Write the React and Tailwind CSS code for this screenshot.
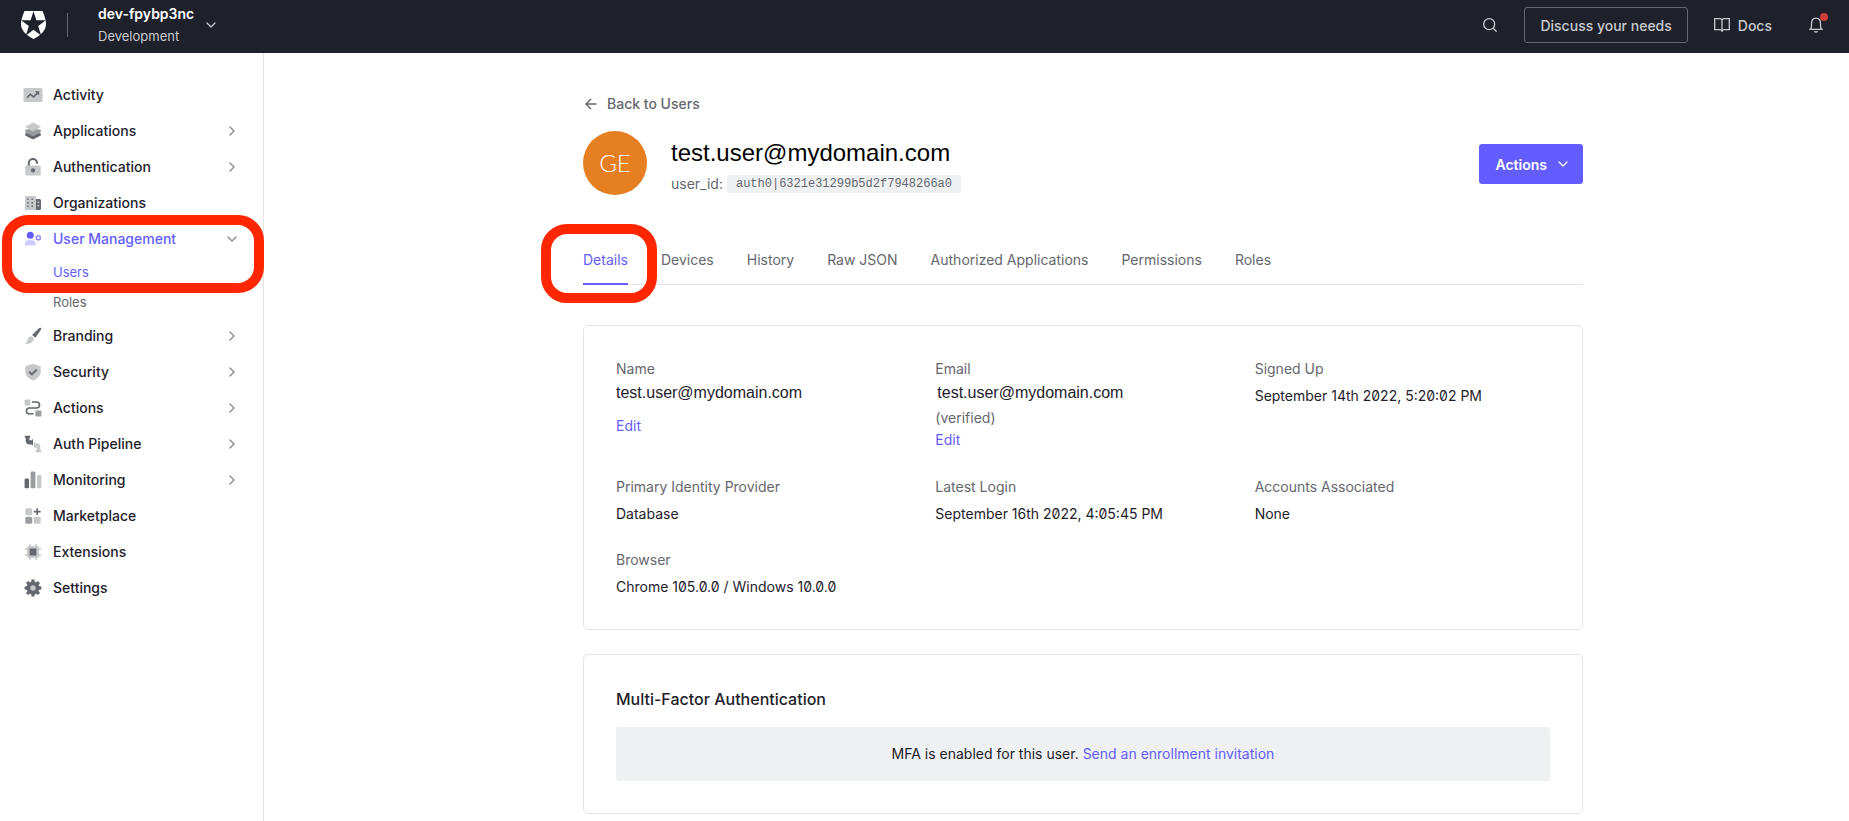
import React from "react";

const DARK = "#65676e";
const MID = "#9b9c9f";
const LIGHT = "#c7c8ca";

function ActivityIcon() {
  return (
    <svg width="20" height="18" viewBox="0 0 20 18" fill="none" className="shrink-0" aria-hidden="true">
      <rect x="0.5" y="2" width="19" height="14" rx="1.6" fill={LIGHT} />
      <path d="M4 11.8 7.3 8.3l3.2 2.6L15 6.6" stroke={DARK} strokeWidth="1.6" />
      <path d="M11.8 5.2h4.4v4.4z" fill={DARK} />
    </svg>
  );
}

function ApplicationsIcon() {
  return (
    <svg width="18" height="18" viewBox="0 0 18 18" aria-hidden="true">
      <path d="M1.2 11.6 9 10l7.8 1.6v2L9 17.6l-7.8-4z" fill={DARK} />
      <path d="M1.2 7.8 9 6.5l7.8 1.3v2.4L9 14.2l-7.8-4z" fill={MID} />
      <path d="M9 .5 17 4.8 9 9.4 1 4.8z" fill={LIGHT} />
    </svg>
  );
}

function AuthenticationIcon() {
  return (
    <svg width="18" height="18" viewBox="0 0 18 18" fill="none" aria-hidden="true">
      <path d="M4.8 8V5.4a4.1 4.1 0 0 1 8.2-.6v1" stroke={DARK} strokeWidth="2" />
      <rect x="1.3" y="7.4" width="15.4" height="10" rx="1.2" fill={LIGHT} />
      <circle cx="9" cy="12.4" r="2.1" fill={DARK} />
    </svg>
  );
}

function OrganizationsIcon() {
  return (
    <svg width="18" height="18" viewBox="0 0 18 18" aria-hidden="true">
      <path d="M1 3a1 1 0 0 1 1-1h9a1 1 0 0 1 1 1v13H1z" fill={LIGHT} />
      <path d="M12 5h3.5A1.5 1.5 0 0 1 17 6.500V14.500a1.500 1.500 0 0 1-1.500 1.500H12z" fill={DARK} />
      <path d="M3.200 4.500h1.500V6H3.200zM7.500 4.500H9V6H7.500zM3.200 8h1.500v1.500H3.200zM7.500 8H9v1.500H7.500zM3.200 11.500h1.500V13H3.200zM7.500 11.500H9V13H7.500z" fill={DARK} />
      <path d="M13.500 7.500h1.700v1.500h-1.700zM13.500 11h1.700v1.500h-1.700z" fill={LIGHT} />
    </svg>
  );
}

function UserManagementIcon() {
  return (
    <svg width="18" height="18" viewBox="0 0 18 18" fill="none" aria-hidden="true">
      <circle cx="6.3" cy="5.3" r="3.5" fill="#635dff" />
      <path d="M.8 14c0-2.700 2-4 5.500-4s5.500 1.300 5.500 4c0 .9-.5 1.500-1.300 1.500H2.100C1.300 15.500.8 14.900.8 14z" fill="#cfccff" />
      <circle cx="14.300" cy="7.800" r="1.900" stroke="#8b86ff" strokeWidth="1.200" />
      <path d="M14.300 4.700v1.200M14.300 9.700v1.200M11.600 6.300l1 .6M16 8.800l1 .6M11.600 9.400l1-.6M16 6.800l1-.6" stroke="#8b86ff" strokeWidth="1.200" />
    </svg>
  );
}

function BrandingIcon() {
  return (
    <svg width="18" height="18" viewBox="0 0 18 18" aria-hidden="true">
      <path d="M16.900.9c.6.500.4 1.300 0 1.900l-5.600 8-3.200-2.900L15 1.200c.5-.5 1.300-.8 1.900-.3z" fill={DARK} />
      <path d="M7 9.400c1.800.2 2.900 1.500 2.600 3.200-.5 3-3.900 4.800-8.800 4.300 1.700-.6 2.200-1.600 2.500-3.300C3.700 11 5 9.300 7 9.400z" fill={LIGHT} />
    </svg>
  );
}

function SecurityIcon() {
  return (
    <svg width="18" height="18" viewBox="0 0 18 18" fill="none" aria-hidden="true">
      <path d="M9 .7 16.700 3.300v5.200c0 4-3 7.200-7.700 8.900-4.700-1.700-7.700-4.900-7.700-8.900V3.300z" fill={LIGHT} />
      <path d="m5.200 8.700 2.700 2.700 4.900-4.800" stroke={DARK} strokeWidth="2" />
    </svg>
  );
}

function ActionsIcon() {
  return (
    <svg width="18" height="18" viewBox="0 0 18 18" fill="none" aria-hidden="true">
      <rect x=".6" y=".6" width="5.800" height="5.800" rx=".8" fill={LIGHT} />
      <path d="M8 3h4.500a3 3 0 0 1 0 6H5.300a2.900 2.900 0 0 0 0 5.800h4.200" stroke={DARK} strokeWidth="1.600" />
      <rect x="11.400" y="11.600" width="6" height="6" rx=".8" fill={MID} />
    </svg>
  );
}

function PipelineIcon() {
  return (
    <svg width="18" height="18" viewBox="0 0 18 18" aria-hidden="true">
      <path d="M.8.8h5.400v1.900h-.8v2.500h2.800v-.9H9v6.200h-.8v-.9H5.800a4.100 4.100 0 0 1-4.100-4.100V2.700H.8z" fill={DARK} />
      <path d="M10 7.300h.9v.9h1.400a4 4 0 0 1 4 4v3.100h1v1.900h-5.600v-1.900h.9v-2.900h-1.700v.9H10z" fill={LIGHT} />
    </svg>
  );
}

function MonitoringIcon() {
  return (
    <svg width="18" height="18" viewBox="0 0 18 18" aria-hidden="true">
      <rect x=".6" y="7.500" width="4.400" height="9.800" rx="1.200" fill={DARK} />
      <rect x="6.600" y=".6" width="4.800" height="16.700" rx="1.200" fill={MID} />
      <rect x="13" y="4" width="4.400" height="13.300" rx="1.200" fill={LIGHT} />
    </svg>
  );
}

function MarketplaceIcon() {
  return (
    <svg width="18" height="18" viewBox="0 0 18 18" aria-hidden="true">
      <rect x="1.300" y="1.300" width="6.900" height="6.900" rx="1.500" fill={LIGHT} />
      <rect x="1.300" y="9.800" width="6.900" height="6.900" rx="1.500" fill={MID} />
      <rect x="9.800" y="9.800" width="6.900" height="6.900" rx="1.500" fill={LIGHT} />
      <path d="M12.400 1.200H14v2.600h2.600v1.600H14V8h-1.600V5.400H9.800V3.800h2.600z" fill={DARK} />
    </svg>
  );
}

function ExtensionsIcon() {
  return (
    <svg width="18" height="18" viewBox="0 0 18 18" aria-hidden="true">
      <path d="M6 1v16M12 1v16M1 6h16M1 12h16" stroke={LIGHT} strokeWidth="1.400" />
      <rect x="3" y="3" width="12" height="12" rx="2" fill={LIGHT} />
      <rect x="5.600" y="5.600" width="6.800" height="6.800" rx=".5" fill={DARK} />
    </svg>
  );
}

function SettingsIcon() {
  const teeth = [0, 45, 90, 135, 180, 225, 270, 315];
  return (
    <svg width="18" height="18" viewBox="0 0 18 18" aria-hidden="true">
      {teeth.map((a) => (
        <path key={a} d="M7 4 7.500.6h3L11 4z" fill={DARK} transform={`rotate(${a} 9 9)`} />
      ))}
      <circle cx="9" cy="9" r="6.300" fill={DARK} />
      <circle cx="9" cy="9" r="2.700" fill={LIGHT} />
    </svg>
  );
}

function Chevron({ down = false, className = "" }) {
  return (
    <svg width="10" height="10" viewBox="0 0 10 10" fill="none" stroke="currentColor" strokeWidth="1.300" className={className} aria-hidden="true">
      <path d={down ? "M1 3l4 4 4-4" : "M3 1l4 4-4 4"} strokeLinecap="round" strokeLinejoin="round" />
    </svg>
  );
}

function NavItem({ icon: Icon, label, chevron, open, active }) {
  return (
    <a href="#" className={`flex h-9 items-center text-[14px] leading-5 font-medium ${active ? "text-[#635dff]" : "text-[#1e212a]"}`}>
      <span className="flex w-[18px] shrink-0 justify-center">
        <Icon />
      </span>
      <span className="ml-[11px] flex-1">{label}</span>
      {chevron && <Chevron down={open} className="text-[#84868c]" />}
    </a>
  );
}

function Header() {
  return (
    <header className="flex h-[53px] items-center bg-[#1e212a] pr-[25px] pb-[3px] pl-[21px] text-[#c9cace]">
      <a href="#" aria-label="Home">
        <svg width="25" height="28" viewBox="0 0 25 28" aria-hidden="true">
          <path d="M3.500 0h18c2 5 3.500 9 3.500 13 0 6.500-5 11-12.500 15C5 24 0 19.500 0 13 0 9 1.500 5 3.500 0z" fill="#fff" />
          <path d="m12.500.2 2.900 9.100h9.400l-7.600 5.700 2.900 9.400-7.600-5.700-7.600 5.700L7.800 15 .2 9.300h9.400z" fill="#1e212a" />
        </svg>
      </a>
      <span className="ml-[21px] h-6 w-px bg-[#65676e]" />
      <button type="button" className="ml-[30px] flex items-center text-left">
        <span className="flex flex-col">
          <span className="text-[14px] leading-[22px] font-semibold text-white">dev-fpybp3nc</span>
          <span className="text-[13px] leading-[22px]">Development</span>
        </span>
        <Chevron down className="ml-3" />
      </button>
      <div className="ml-auto flex items-center">
        <button type="button" aria-label="Search">
          <svg width="14" height="14" viewBox="0 0 14 14" fill="none" stroke="currentColor" strokeWidth="1.300" aria-hidden="true">
            <circle cx="6.200" cy="6.200" r="5.500" />
            <path d="m10.200 10.200 3.400 3.400" />
          </svg>
        </button>
        <button type="button" className="ml-[27px] h-9 rounded-[3px] border border-[#65676e] px-[15px] text-[14px] font-medium whitespace-nowrap">
          Discuss your needs
        </button>
        <a href="#" className="ml-[26px] flex items-center gap-2 text-[14px] font-medium">
          <svg width="16" height="14" viewBox="0 0 16 14" fill="none" stroke="currentColor" strokeWidth="1.300" aria-hidden="true">
            <path d="M8 2.200C7.700 1.200 7 .7 6 .7H.7v11H6c1 0 1.700.6 2 1.600.3-1 1-1.600 2-1.600h5.300V.7H10c-1 0-1.700.5-2 1.500zM8 2v11" />
          </svg>
          Docs
        </a>
        <button type="button" aria-label="Notifications" className="relative ml-9">
          <svg width="16" height="16" viewBox="0 0 16 16" fill="none" stroke="currentColor" strokeWidth="1.300" aria-hidden="true">
            <path d="M1.200 12.300h13.600M2.700 12c.9-1 .8-2.300.8-5.300C3.500 3.500 5.300 1.200 8 1.200s4.500 2.300 4.500 5.500c0 3-.1 4.300.8 5.300" />
            <path d="M6.300 14.300c.4.900 2.900.9 3.400 0" />
          </svg>
          <span className="absolute -top-1 -right-1 size-2 rounded-full bg-[#d03c38]" />
        </button>
      </div>
    </header>
  );
}

function Sidebar() {
  return (
    <nav className="w-[264px] shrink-0 border-r border-[#e3e4e6] pt-6 pr-[26px] pl-6">
      <NavItem icon={ActivityIcon} label="Activity" />
      <NavItem icon={ApplicationsIcon} label="Applications" chevron />
      <NavItem icon={AuthenticationIcon} label="Authentication" chevron />
      <NavItem icon={OrganizationsIcon} label="Organizations" />
      <div className="relative">
        <NavItem icon={UserManagementIcon} label="User Management" chevron open active />
        <div className="flex flex-col pl-[29px] text-[13px]">
          <a href="#" className="h-[30px] leading-[30px] text-[#635dff]">Users</a>
          <a href="#" className="h-[31px] leading-[30px] text-[#65676e]">Roles</a>
        </div>
        <span className="pointer-events-none absolute -top-[6px] -right-[27px] -left-[22px] h-[78px] rounded-[26px] border-[10px] border-[#ff2600]" />
      </div>
      <NavItem icon={BrandingIcon} label="Branding" chevron />
      <NavItem icon={SecurityIcon} label="Security" chevron />
      <NavItem icon={ActionsIcon} label="Actions" chevron />
      <NavItem icon={PipelineIcon} label="Auth Pipeline" chevron />
      <NavItem icon={MonitoringIcon} label="Monitoring" chevron />
      <NavItem icon={MarketplaceIcon} label="Marketplace" />
      <NavItem icon={ExtensionsIcon} label="Extensions" />
      <NavItem icon={SettingsIcon} label="Settings" />
    </nav>
  );
}

const TABS = ["Devices", "History", "Raw JSON", "Authorized Applications", "Permissions", "Roles"];

function Field({ label, children }) {
  return (
    <div className="leading-[21px]">
      <dt className="text-[#65676e]">{label}</dt>
      <dd className="mt-[6px]">{children}</dd>
    </div>
  );
}

const EMAIL = "test.user@mydomain.com";

export default function App() {
  return (
    <div className="flex min-h-screen flex-col bg-white font-['Inter',sans-serif] text-[14px] text-[#1e212a] slashed-zero">
      <Header />
      <div className="flex flex-1">
        <Sidebar />
        <main className="min-w-0 flex-1 pl-[53px]">
          <div className="mx-auto max-w-[1000px] pt-10 pb-2">
            <a href="#" className="inline-flex items-center gap-[10px] pl-[2px] leading-[22px] font-medium text-[#65676e]">
              <svg width="12" height="12" viewBox="0 0 12 12" fill="none" stroke="currentColor" strokeWidth="1.400" aria-hidden="true">
                <path d="M11.500 6H1M6 1 1 6l5 5" />
              </svg>
              Back to Users
            </a>

            <div className="mt-4 flex items-start">
              <div className="flex size-16 items-center justify-center rounded-full bg-[#e67e22] font-['Lato',sans-serif] text-[24px] font-light text-white">GE</div>
              <div className="ml-6 pt-[6px]">
                <h1 className="font-['Liberation_Sans',Arial,sans-serif] text-[24px] leading-8 text-black">{EMAIL}</h1>
                <p className="mt-1 flex items-center gap-1 leading-[22px] text-[#65676e]">
                  user_id:
                  <code className="rounded-[3px] bg-[#eff0f2] px-[9px] font-['Liberation_Mono',monospace] text-[12px] leading-[18px]">auth0|6321e31299b5d2f7948266a0</code>
                </p>
              </div>
              <button type="button" className="mt-[13px] ml-auto flex h-10 items-center gap-[11px] rounded-[3px] bg-[#635dff] pr-[15px] pl-4 font-semibold text-white">
                Actions
                <Chevron down />
              </button>
            </div>

            <div className="mt-[46px] flex gap-[33px] border-b border-[#e3e4e6] text-[#65676e]">
              <div className="relative">
                <a href="#" className="-mb-px block border-b-2 border-[#635dff] pt-2 pb-3 leading-[22px] text-[#635dff]">Details</a>
                <span className="pointer-events-none absolute -top-[17px] -right-[29px] -left-[42px] h-[79px] rounded-[26px] border-[10px] border-[#ff2600]" />
              </div>
              {TABS.map((t) => (
                <a key={t} href="#" className="pt-2 leading-[22px]">{t}</a>
              ))}
            </div>

            <section className="mt-10 rounded-[5px] border border-[#e3e4e6] p-8">
              <dl className="grid grid-cols-3 gap-x-6 gap-y-[25px]">
                <Field label="Name">
                  <div className="-mt-1 font-['Liberation_Sans',Arial,sans-serif] text-[16px] leading-6">{EMAIL}</div>
                  <a href="#" className="mt-[10px] block leading-[22px] text-[#635dff]">Edit</a>
                </Field>
                <Field label="Email">
                  <div className="-mt-1 pl-[2px] font-['Liberation_Sans',Arial,sans-serif] text-[16px] leading-6">{EMAIL}</div>
                  <div className="mt-[2px] leading-[22px] text-[#65676e]">(verified)</div>
                  <a href="#" className="block leading-[22px] text-[#635dff]">Edit</a>
                </Field>
                <Field label="Signed Up">September 14th 2022, 5:20:02 PM</Field>
                <Field label="Primary Identity Provider">Database</Field>
                <Field label="Latest Login">September 16th 2022, 4:05:45 PM</Field>
                <Field label="Accounts Associated">None</Field>
                <Field label="Browser">Chrome 105.0.0 / Windows 10.0.0</Field>
              </dl>
            </section>

            <section className="mt-6 rounded-[5px] border border-[#e3e4e6] p-8">
              <h2 className="text-[16px] leading-6 font-medium">Multi-Factor Authentication</h2>
              <p className="mt-4 rounded-[3px] bg-[#eff0f2] py-4 text-center leading-[22px]">
                MFA is enabled for this user.{" "}
                <a href="#" className="text-[#635dff]">Send an enrollment invitation</a>
              </p>
            </section>
          </div>
        </main>
      </div>
    </div>
  );
}
